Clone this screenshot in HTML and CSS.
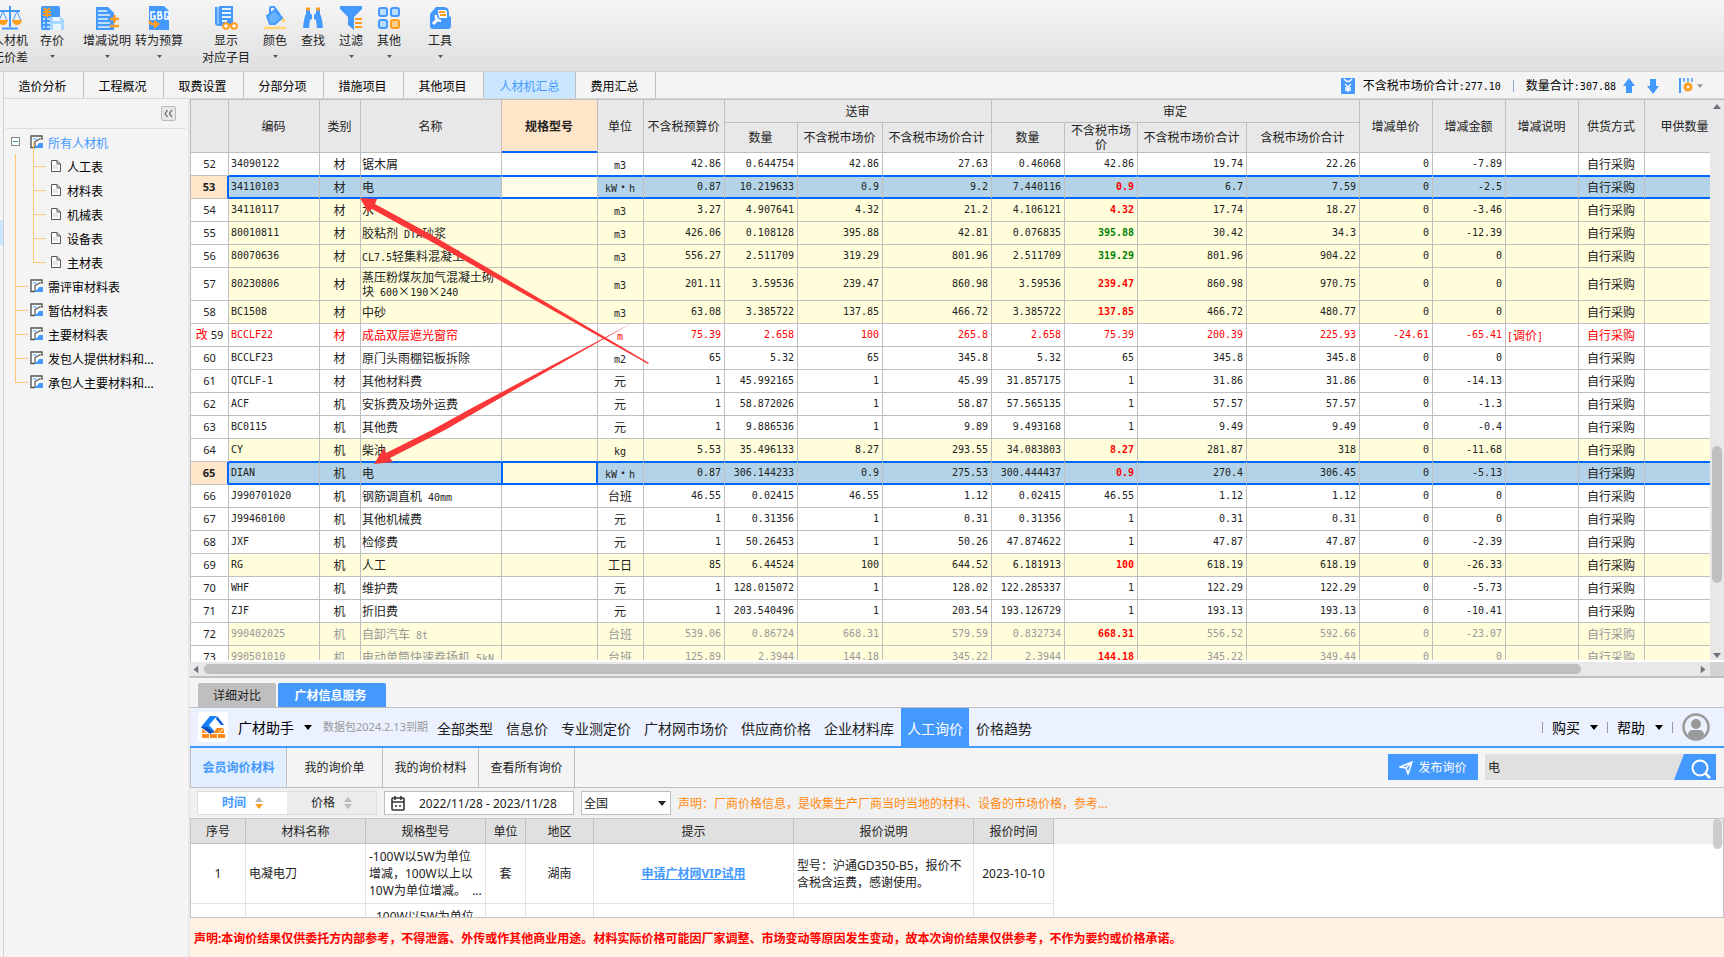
FILE: index.html
```html
<!DOCTYPE html>
<html lang="zh-CN">
<head>
<meta charset="utf-8">
<title>人材机汇总</title>
<link rel="stylesheet" href="styles.css">
</head>
<body>
<svg class="defs" aria-hidden="true">
  <symbol id="sheet" viewBox="0 0 14 14"><path d="M12 4V1H1V12.500H5" fill="#fff" stroke="#555" stroke-width="1.400"/><path d="M3 3h4v2H3z" fill="#a8d0ff"/><path d="M5 12.500V6.500L7.500 5.500 9.500 4H13" fill="none" stroke="#555" stroke-width="1.200"/><path d="M5 13V11h2l2-3h4v5z" fill="#4499ff"/></symbol>
  <symbol id="page" viewBox="0 0 10 12"><path d="M.5.5H6L9.500 4V11.500H.5z" fill="#fff" stroke="#555"/><path d="M6 .5V4H9.500" fill="none" stroke="#555"/><path d="M2 6h5M2 8h5" stroke="#ccc"/></symbol>
  <symbol id="caret" viewBox="0 0 8 5"><path d="M0 0H8L4 5z" fill="currentColor"/></symbol>
</svg>

<header class="toolbar">
  <button class="tool cut"><svg viewBox="0 0 24 24"><path d="M12 0v21M2 5h20M4 22.500h16" stroke="#4499ff" stroke-width="2" fill="none"/><path d="M5 5L1 15h8zM19 5l-4 10h8z" fill="none" stroke="#4499ff"/><path d="M0 14h10q-1 5-5 5t-5-5zM14 14h10q-1 5-5 5t-5-5z" fill="#ff9d1e"/></svg><span>人材机</span><span>无价差</span></button>
  <button class="tool"><svg viewBox="0 0 24 24"><rect x="1" y="0" width="19" height="24" rx="2" fill="#4499ff"/><path d="M3 13h2M3 17h2M3 21h2M7 13h3M7 17h3M7 21h3" stroke="#b9dcff" stroke-width="2"/><path d="M4 2l3 3 3-3M7 5v6M3 6h8M3 9h8" stroke="#ff9d1e" stroke-width="2" fill="none"/><path d="M10 11h11l3 3v10H10z" fill="#a9d6ff"/><path d="M13 11h7v4h-7zM13 18h8v6h-8z" fill="#e8f5ff"/></svg><span>存价</span><svg class="dd"><use href="#caret"/></svg></button>
  <button class="tool wide first"><svg viewBox="0 0 24 24"><path d="M1 1h12l6 6v17H1z" fill="#4499ff"/><path d="M3 5h9M3 9h12M3 13h10M3 17h12M3 21h12" stroke="#e4f2ff" stroke-width="1.500"/><path d="M15 13h9M19.500 9v8M15 20h9" stroke="#ff9d1e" stroke-width="2.500"/></svg><span>增减说明</span><svg class="dd"><use href="#caret"/></svg></button>
  <button class="tool wide"><svg viewBox="0 0 24 24"><path d="M2 0h15l5 5v19H2z" fill="#4499ff"/><path d="M8 6H4v7h4v-3H6M11 6v7h2q2 0 2-2t-3-1.500q3-.5 2-3.500zM18 6h4v6l-1 1h-3zM20 10l3 4" fill="none" stroke="#fff" stroke-width="1.500"/><path d="M1 15q1 5 6 4v4l6-5-6-4v3q-3 0-3-2z" fill="#ff9d1e"/></svg><span>转为预算</span><svg class="dd"><use href="#caret"/></svg></button>
  <button class="tool wide split"><svg viewBox="0 0 24 24"><path d="M1 1h4v17q0 2 4 2H5q-4 0-4-3z" fill="#4499ff"/><path d="M5 0h14v20H5z" fill="#4499ff"/><path d="M8 3h9M8 7h9M8 11h9M8 15h5" stroke="#e4f2ff" stroke-width="2"/><path d="M4 1v17" stroke="#cfe6ff"/><circle cx="12" cy="20" r="2.800" fill="#fff" stroke="#ff9d1e" stroke-width="2"/><circle cx="20" cy="20" r="2.800" fill="#fff" stroke="#ff9d1e" stroke-width="2"/><path d="M14 19h4" stroke="#ff9d1e" stroke-width="2"/></svg><span>显示</span><span>对应子目</span></button>
  <button class="tool colour"><svg viewBox="0 0 24 24"><path d="M4 10L12 4l7 8-7 6H7z" fill="#68b2ff" stroke="#4499ff" stroke-width="2"/><path d="M7 7V3q0-3 4-2l6 8" fill="none" stroke="#4499ff" stroke-width="2"/><path d="M20.500 12q4 4 0 4t0-4z" fill="#ffd15c"/><path d="M1 22h22" stroke="#ffd678" stroke-width="2.500"/></svg><span>颜色</span><svg class="dd"><use href="#caret"/></svg></button>
  <button class="tool"><svg viewBox="0 0 24 24"><path d="M5 2h4v5l2 2v4l-2 1-1 8H2Q3 11 5 8zM19 2h-4v5l-2 2v4l2 1 1 8h6Q21 11 19 8z" fill="#4499ff"/><path d="M5 3h4M15 3h4" stroke="#ff9d1e" stroke-width="3"/></svg><span>查找</span></button>
  <button class="tool"><svg viewBox="0 0 24 24"><path d="M1 0h22v3l-8 8v13l-6-5v-8L1 3z" fill="#4499ff"/><path d="M16 13h7M16 17h7M16 21h7" stroke="#ff9d1e" stroke-width="2"/></svg><span>过滤</span><svg class="dd"><use href="#caret"/></svg></button>
  <button class="tool"><svg viewBox="0 0 24 24"><g fill="#b9dcff" stroke="#4499ff" stroke-width="2"><rect x="2" y="2" width="8" height="8" rx="2"/><rect x="14" y="2" width="8" height="8" rx="2"/><rect x="2" y="14" width="8" height="8" rx="2"/></g><rect x="14" y="14" width="8" height="8" rx="2" fill="#ffd08a" stroke="#ff9d1e" stroke-width="2"/></svg><span>其他</span><svg class="dd"><use href="#caret"/></svg></button>
  <button class="tool last"><svg viewBox="0 0 24 24"><path d="M8 1h8q5 0 5 6v3l2 1v9q0 3-3 3H5q-3 0-3-3V8z" fill="#4499ff"/><path d="M10 4h7q2 0 2 3v5h-8z" fill="#fff"/><path d="M11 6h6M12 9h6" stroke="#ff9d1e" stroke-width="2"/><path d="M5 18l5-5" stroke="#fff" stroke-width="3"/><path d="M8 9q-1 5 5 6" fill="none" stroke="#fff" stroke-width="2.500"/></svg><span>工具</span><svg class="dd"><use href="#caret"/></svg></button>
</header>

<div class="app">
  <div class="edge"><i></i></div>
  <div class="main">
    <nav class="tabs">
      <button>造价分析</button><button>工程概况</button><button>取费设置</button><button>分部分项</button><button>措施项目</button><button>其他项目</button><button class="on">人材机汇总</button><button>费用汇总</button>
      <div class="totals">
        <svg width="14" height="16" viewBox="0 0 14 16"><rect width="14" height="16" rx="1" fill="#4499ff"/><path d="M3 1q4 5 8 0M4 6l3 3 3-3M7 9v5M4 10h6M4 12h6" fill="none" stroke="#fff" stroke-width="1.300"/></svg>
        <span>不含税市场价合计<span class="m">:277.10</span></span><b></b><span>数量合计<span class="m">:307.88</span></span>
        <svg class="up" width="12" height="16" viewBox="0 0 12 16"><path d="M6 0l6 8H9v7H3V8H0z" fill="#4499ff"/></svg>
        <svg class="down" width="12" height="16" viewBox="0 0 12 16"><path d="M6 16l6-8H9V1H3v7H0z" fill="#4499ff"/></svg>
        <svg width="14" height="15" viewBox="0 0 14 15"><path d="M1 0v15" stroke="#4499ff" stroke-width="2"/><path d="M5 0v4M9 0v4M13 0v4" stroke="#4499ff" stroke-width="1.500"/><circle cx="9" cy="9" r="3" fill="none" stroke="#ff9d1e" stroke-width="3"/></svg>
        <svg class="tiny" width="6" height="4"><use href="#caret"/></svg>
      </div>
    </nav>

    <div class="work">
      <aside class="side">
        <div class="sidehead"><button aria-label="收起"><svg width="10" height="8" viewBox="0 0 10 8"><path d="M4 0L1 4l3 4M9 0L6 4l3 4" fill="none" stroke="#555" stroke-width="1.200"/></svg></button></div>
        <ul class="tree">
          <li class="root"><i class="box"></i><svg class="sh"><use href="#sheet"/></svg><a href="#all">所有人材机</a>
            <ul>
              <li><svg><use href="#page"/></svg><a href="#a">人工表</a></li>
              <li><svg><use href="#page"/></svg><a href="#b">材料表</a></li>
              <li><svg><use href="#page"/></svg><a href="#c">机械表</a></li>
              <li><svg><use href="#page"/></svg><a href="#d">设备表</a></li>
              <li><svg><use href="#page"/></svg><a href="#e">主材表</a></li>
            </ul>
          </li>
          <li><svg class="sh"><use href="#sheet"/></svg><a href="#f">需评审材料表</a></li>
          <li><svg class="sh"><use href="#sheet"/></svg><a href="#g">暂估材料表</a></li>
          <li><svg class="sh"><use href="#sheet"/></svg><a href="#h">主要材料表</a></li>
          <li><svg class="sh"><use href="#sheet"/></svg><a href="#i">发包人提供材料和...</a></li>
          <li><svg class="sh"><use href="#sheet"/></svg><a href="#j">承包人主要材料和...</a></li>
        </ul>
      </aside>

      <section class="content">
        <div class="gridwrap">
          <div class="gridclip">
          <table class="grid">
            <colgroup><col class="w38"><col class="w91"><col class="w41"><col class="w141"><col class="w96"><col class="w46"><col class="w81"><col class="w73"><col class="w85"><col class="w109"><col class="w73"><col class="w73"><col class="w109"><col class="w113"><col class="w73"><col class="w73"><col class="w73"><col class="w66"><col class="w81"></colgroup>
            <thead>
              <tr><th rowspan="2"></th><th rowspan="2">编码</th><th rowspan="2">类别</th><th rowspan="2">名称</th><th rowspan="2" class="cur">规格型号</th><th rowspan="2">单位</th><th rowspan="2">不含税预算价</th><th colspan="3">送审</th><th colspan="4">审定</th><th rowspan="2">增减单价</th><th rowspan="2">增减金额</th><th rowspan="2">增减说明</th><th rowspan="2">供货方式</th><th rowspan="2">甲供数量</th></tr>
              <tr class="sub"><th>数量</th><th>不含税市场价</th><th>不含税市场价合计</th><th>数量</th><th class="wrap">不含税市场价</th><th>不含税市场价合计</th><th>含税市场价合计</th></tr>
            </thead>
            <tbody>
              <tr><th>52<td>34090122<td>材<td>锯木屑<td><td><span class="m">m3</span><td>42.86<td>0.644754<td>42.86<td>27.63<td>0.46068<td>42.86<td>19.74<td>22.26<td>0<td>-7.89<td><td>自行采购<td></tr>
              <tr class="s"><th>53<td>34110103<td>材<td>电<td><td><span class="m">kW</span>·<span class="m">h</span><td>0.87<td>10.219633<td>0.9<td>9.2<td>7.440116<td class="hi">0.9<td>6.7<td>7.59<td>0<td>-2.5<td><td>自行采购<td></tr>
              <tr class="y"><th>54<td>34110117<td>材<td>水<td><td><span class="m">m3</span><td>3.27<td>4.907641<td>4.32<td>21.2<td>4.106121<td class="hi">4.32<td>17.74<td>18.27<td>0<td>-3.46<td><td>自行采购<td></tr>
              <tr class="y"><th>55<td>80010811<td>材<td>胶粘剂<span class="m"> DTA</span>砂浆<td><td><span class="m">m3</span><td>426.06<td>0.108128<td>395.88<td>42.81<td>0.076835<td class="lo">395.88<td>30.42<td>34.3<td>0<td>-12.39<td><td>自行采购<td></tr>
              <tr class="y"><th>56<td>80070636<td>材<td><span class="m">CL7.5</span>轻集料混凝土<td><td><span class="m">m3</span><td>556.27<td>2.511709<td>319.29<td>801.96<td>2.511709<td class="lo">319.29<td>801.96<td>904.22<td>0<td>0<td><td>自行采购<td></tr>
              <tr class="y tall"><th>57<td>80230806<td>材<td>蒸压粉煤灰加气混凝土砌块<span class="m"> 600</span>×<span class="m">190</span>×<span class="m">240</span><td><td><span class="m">m3</span><td>201.11<td>3.59536<td>239.47<td>860.98<td>3.59536<td class="hi">239.47<td>860.98<td>970.75<td>0<td>0<td><td>自行采购<td></tr>
              <tr class="y"><th>58<td>BC1508<td>材<td>中砂<td><td><span class="m">m3</span><td>63.08<td>3.385722<td>137.85<td>466.72<td>3.385722<td class="hi">137.85<td>466.72<td>480.77<td>0<td>0<td><td>自行采购<td></tr>
              <tr class="r"><th class="mod"><span>改</span> 59<td>BCCLF22<td>材<td>成品双层遮光窗帘<td><td><span class="m">m</span><td>75.39<td>2.658<td>100<td>265.8<td>2.658<td>75.39<td>200.39<td>225.93<td>-24.61<td>-65.41<td><span class="m">[</span>调价<span class="m">]</span><td>自行采购<td></tr>
              <tr><th>60<td>BCCLF23<td>材<td>原门头雨棚铝板拆除<td><td><span class="m">m2</span><td>65<td>5.32<td>65<td>345.8<td>5.32<td>65<td>345.8<td>345.8<td>0<td>0<td><td>自行采购<td></tr>
              <tr><th>61<td>QTCLF-1<td>材<td>其他材料费<td><td>元<td>1<td>45.992165<td>1<td>45.99<td>31.857175<td>1<td>31.86<td>31.86<td>0<td>-14.13<td><td>自行采购<td></tr>
              <tr><th>62<td>ACF<td>机<td>安拆费及场外运费<td><td>元<td>1<td>58.872026<td>1<td>58.87<td>57.565135<td>1<td>57.57<td>57.57<td>0<td>-1.3<td><td>自行采购<td></tr>
              <tr><th>63<td>BC0115<td>机<td>其他费<td><td>元<td>1<td>9.886536<td>1<td>9.89<td>9.493168<td>1<td>9.49<td>9.49<td>0<td>-0.4<td><td>自行采购<td></tr>
              <tr class="y"><th>64<td>CY<td>机<td>柴油<td><td><span class="m">kg</span><td>5.53<td>35.496133<td>8.27<td>293.55<td>34.083803<td class="hi">8.27<td>281.87<td>318<td>0<td>-11.68<td><td>自行采购<td></tr>
              <tr class="s edit"><th>65<td>DIAN<td>机<td>电<td><td><span class="m">kW</span>·<span class="m">h</span><td>0.87<td>306.144233<td>0.9<td>275.53<td>300.444437<td class="hi">0.9<td>270.4<td>306.45<td>0<td>-5.13<td><td>自行采购<td></tr>
              <tr><th>66<td>J990701020<td>机<td>钢筋调直机<span class="m"> 40mm</span><td><td>台班<td>46.55<td>0.02415<td>46.55<td>1.12<td>0.02415<td>46.55<td>1.12<td>1.12<td>0<td>0<td><td>自行采购<td></tr>
              <tr><th>67<td>J99460100<td>机<td>其他机械费<td><td>元<td>1<td>0.31356<td>1<td>0.31<td>0.31356<td>1<td>0.31<td>0.31<td>0<td>0<td><td>自行采购<td></tr>
              <tr><th>68<td>JXF<td>机<td>检修费<td><td>元<td>1<td>50.26453<td>1<td>50.26<td>47.874622<td>1<td>47.87<td>47.87<td>0<td>-2.39<td><td>自行采购<td></tr>
              <tr class="y"><th>69<td>RG<td>机<td>人工<td><td>工日<td>85<td>6.44524<td>100<td>644.52<td>6.181913<td class="hi">100<td>618.19<td>618.19<td>0<td>-26.33<td><td>自行采购<td></tr>
              <tr><th>70<td>WHF<td>机<td>维护费<td><td>元<td>1<td>128.015072<td>1<td>128.02<td>122.285337<td>1<td>122.29<td>122.29<td>0<td>-5.73<td><td>自行采购<td></tr>
              <tr><th>71<td>ZJF<td>机<td>折旧费<td><td>元<td>1<td>203.540496<td>1<td>203.54<td>193.126729<td>1<td>193.13<td>193.13<td>0<td>-10.41<td><td>自行采购<td></tr>
              <tr class="y g"><th>72<td>990402025<td>机<td>自卸汽车<span class="m"> 8t</span><td><td>台班<td>539.06<td>0.86724<td>668.31<td>579.59<td>0.832734<td class="hi">668.31<td>556.52<td>592.66<td>0<td>-23.07<td><td>自行采购<td></tr>
              <tr class="y g"><th>73<td>990501010<td>机<td>电动单筒快速卷扬机<span class="m"> 5kN</span><td><td>台班<td>125.89<td>2.3944<td>144.18<td>345.22<td>2.3944<td class="hi">144.18<td>345.22<td>349.44<td>0<td>0<td><td>自行采购<td></tr>
            </tbody>
          </table>
          </div>
          <div class="vbar"><svg class="aup" width="8" height="5"><use href="#caret"/></svg><i></i><svg width="8" height="5"><use href="#caret"/></svg></div>
          <svg class="marks" width="300" height="300" viewBox="355 190 300 300" aria-hidden="true"><path d="M360 198L377 199 375 204 430 234 649 363 648 364 430 241 372 209 368 212zM374 464L384 448 386 453 432 430 470 409 632 323 502 397 445 430 390 458 393 462z" fill="#fb3737"/></svg>
        </div>
        <div class="hbar"><svg class="al" width="8" height="5"><use href="#caret"/></svg><div class="track"><i></i></div><svg class="ar" width="8" height="5"><use href="#caret"/></svg><b></b></div>

        <div class="ptabs"><button>详细对比</button><button class="on">广材信息服务</button></div>

        <div class="pnav">
          <svg class="logo" viewBox="0 0 30 30"><rect width="30" height="30" rx="4" fill="#fff"/><path d="M3 15L12 4h7l-8 9 7 8h-6z" fill="#1583f7"/><path d="M19 4l7 9h-3l-5-6z" fill="#0b5de0"/><path d="M3 15h6l6 5-3 2z" fill="#0f4fb5"/><path d="M4 17l5 4h-5zM19 16h7l-6 5h-5zM4 22h7v4H4zM12 22h7v4h-7zM20 22h7v4h-7zM26 17v4h-5z" fill="#ff8a1c"/></svg>
          <button class="brand">广材助手 <svg width="8" height="5"><use href="#caret"/></svg></button>
          <small>数据包2024.2.13到期</small>
          <nav><a href="#1">全部类型</a><a href="#2">信息价</a><a href="#3">专业测定价</a><a href="#4">广材网市场价</a><a href="#5">供应商价格</a><a href="#6">企业材料库</a><a href="#7" class="on">人工询价</a><a href="#8">价格趋势</a></nav>
          <div class="acct"><button>购买 <svg width="8" height="5"><use href="#caret"/></svg></button><button>帮助 <svg width="8" height="5"><use href="#caret"/></svg></button><b></b><svg class="ava" viewBox="0 0 28 28"><circle cx="14" cy="14" r="12.500" fill="none" stroke="#999" stroke-width="2.500"/><circle cx="14" cy="11" r="5" fill="#999"/><path d="M6 22q0-5 5-5h6q5 0 5 5l-3 3H9z" fill="#999"/></svg></div>
        </div>

        <div class="sub2">
          <button class="on">会员询价材料</button><button>我的询价单</button><button>我的询价材料</button><button>查看所有询价</button>
          <button class="pub"><svg width="14" height="14" viewBox="0 0 14 14"><path d="M1 6L13 1 9 13 7 7zM7 7l6-6" fill="none" stroke="#fff" stroke-width="1.500"/></svg>发布询价</button>
          <form class="search"><input type="text" value="电" aria-label="搜索"><button type="button" aria-label="搜索"><svg width="20" height="20" viewBox="0 0 20 20"><circle cx="9" cy="9" r="7.500" fill="none" stroke="#fff" stroke-width="2"/><path d="M14 14l5 5" stroke="#fff" stroke-width="2.500"/></svg></button></form>
        </div>

        <div class="filter">
          <div class="sorts"><button class="on">时间<svg width="8" height="12" viewBox="0 0 8 12"><path d="M0 5h8L4 0z" fill="#bbb"/><path d="M0 7h8l-4 5z" fill="#ff9d1e"/></svg></button><button>价格<svg width="8" height="12" viewBox="0 0 8 12"><path d="M0 5h8L4 0zM0 7h8l-4 5z" fill="#bbb"/></svg></button></div>
          <label class="date"><svg width="14" height="15" viewBox="0 0 14 15"><rect x="1" y="2" width="12" height="12" rx="1" fill="none" stroke="#333" stroke-width="1.600"/><path d="M1 6h12M4 0v4M10 0v4M4 10h2M8 10h2" stroke="#333" stroke-width="1.600"/></svg><input type="text" value="2022/11/28 - 2023/11/28" aria-label="日期"></label>
          <label class="region"><select aria-label="地区"><option>全国</option></select><svg width="8" height="5"><use href="#caret"/></svg></label>
          <p>声明：厂商价格信息，是收集生产厂商当时当地的材料、设备的市场价格，参考...</p>
        </div>

        <div class="quotes">
          <table>
            <colgroup><col class="w55"><col class="w120"><col class="w120"><col class="w40"><col class="w68"><col class="w200"><col class="w180"><col class="w80"></colgroup>
            <thead><tr><th>序号</th><th>材料名称</th><th>规格型号</th><th>单位</th><th>地区</th><th>提示</th><th>报价说明</th><th>报价时间</th></tr></thead>
            <tbody>
              <tr><td>1</td><td class="l">电凝电刀</td><td class="l">-100W以5W为单位<br>增减，100W以上以<br>10W为单位增减。&nbsp; ...</td><td>套</td><td>湖南</td><td><a href="#vip">申请广材网VIP试用</a></td><td class="l">型号：沪通GD350-B5，报价不含税含运费，感谢使用。</td><td>2023-10-10</td></tr>
              <tr class="next"><td></td><td></td><td class="l">&nbsp;-100W以5W为单位</td><td></td><td></td><td></td><td></td><td></td></tr>
            </tbody>
          </table>
          <i class="thumb"></i>
        </div>
        <footer>声明:本询价结果仅供委托方内部参考，不得泄露、外传或作其他商业用途。材料实际价格可能因厂家调整、市场变动等原因发生变动，故本次询价结果仅供参考，不作为要约或价格承诺。</footer>
      </section>
    </div>
  </div>
</div>
</body>
</html>
```
FILE: styles.css
```css
* { box-sizing: border-box; }
body { margin: 0; height: 100vh; display: flex; flex-direction: column; overflow: hidden; background: #f4f4f4; color: #222; font: 12px/16px "Noto Sans", "Noto Sans CJK SC", sans-serif; }
button, input, select { font: inherit; color: inherit; margin: 0; padding: 0; border: 0; background: none; border-radius: 0; }
a { color: inherit; text-decoration: none; }
svg { display: block; flex: none; }
.defs { position: absolute; width: 0; height: 0; }
.m { font: 10px/12px "DejaVu Sans Mono", monospace; white-space: pre; }

/* toolbar */
.toolbar { height: 72px; flex: none; display: flex; align-items: flex-start; padding-top: 6px; background: linear-gradient(#f5f5f5, #dfdfdf); border-bottom: 1px solid #cfcfcf; }
.tool { width: 38px; display: flex; flex-direction: column; align-items: center; white-space: nowrap; }
.tool > svg { width: 24px; height: 24px; margin-bottom: 2px; }
.tool > span { height: 17px; line-height: 17px; }
.tool > .dd { width: 5px; height: 3px; margin-top: 6px; color: #555; }
.cut { margin-left: -9px; margin-right: 4px; }
.wide { width: 52px; }
.first { margin-left: 10px; }
.split { margin-left: 15px; }
.colour { margin-left: 4px; }
.last { margin-left: 13px; }

.app { flex: 1; min-height: 0; display: flex; }
.edge { width: 4px; flex: none; border-right: 1px solid #d0d0d0; padding-top: 148px; }
.edge i { display: block; height: 25px; background: #cbe6ff; }
.main { flex: 1; min-width: 0; display: flex; flex-direction: column; }
.tabs { height: 27px; flex: none; display: flex; border-bottom: 1px solid #d8d8d8; color: #000; }
.tabs button { width: 80px; border-right: 1px solid #bfbfbf; padding: 3px 2px 0 0; }
.tabs .on { width: 92px; background: #cbe6ff; color: #4499ff; padding-right: 0; }
.totals { margin-left: auto; display: flex; align-items: center; padding-right: 21px; gap: 8px; padding-top: 1px; }
.totals b { width: 1px; height: 12px; margin: 0 4px; background: #8aa9d0; }
.totals .up { margin-left: -1px; }
.totals .down { margin: 0 12px 0 4px; }
.totals .tiny { color: #999; margin-left: -4px; }

.work { flex: 1; min-height: 0; display: flex; }
.side { width: 186px; flex: none; border-right: 2px solid #e8e8e8; padding: 0 2px; }
.sidehead { height: 30px; padding: 7px 10px 0 0; display: flex; justify-content: flex-end; border-bottom: 1px solid #dedede; }
.sidehead button { width: 15px; height: 15px; border: 1px solid #bbb; border-radius: 2px; background: #e8e8e8; padding: 3px 2px; }
.sidehead svg { width: 9px; height: 7px; }
.tree, .tree ul { list-style: none; margin: 0; padding: 0; }
.tree { padding: 3px 0 0 24px; color: #000; }
.tree li { position: relative; min-height: 24px; display: flex; flex-wrap: wrap; align-items: center; line-height: 24px; column-gap: 4px; }
.tree .sh { width: 14px; height: 14px; margin-bottom: 4px; }
.tree ul { width: 100%; padding-left: 21px; }
.tree ul svg { width: 10px; height: 12px; margin-bottom: 4px; }
.tree ul li { column-gap: 6px; }
.root > a { color: #4499ff; }
.box { position: absolute; left: -19px; top: 5px; width: 9px; height: 9px; border: 1px solid #888; background: linear-gradient(#39a, #39a) center / 5px 1px no-repeat #fff; }
.tree li:not(.root)::before { content: ""; position: absolute; left: -15px; top: -14px; width: 12px; height: 24px; border: solid #ffc673; border-width: 0 0 1px 1px; }
.tree ul li::before { left: -18px !important; }
.root::after { content: ""; position: absolute; left: -15px; top: 22px; bottom: 0; border-left: 1px solid #ffc673; }

/* price grid */
.content { flex: 1; min-width: 0; display: flex; flex-direction: column; }
.gridwrap { flex: 1; min-height: 0; display: flex; position: relative; background: #fff; border-left: 1px solid #bfbfbf; border-top: 1px solid #bfbfbf; padding-bottom: 2px; }
.gridclip { flex: 1; min-width: 0; overflow: hidden; }
table { table-layout: fixed; border-collapse: separate; border-spacing: 0; }
.grid { width: 1535px; font: 12px/14px "Noto Sans CJK SC", sans-serif; }
.grid th, .grid td { border: solid #bfbfbf; border-width: 0 1px 1px 0; padding: 0 2px; white-space: nowrap; overflow: hidden; font-weight: 400; }
.grid thead th { background: #e8e8e8; height: 23px; padding: 0 1px 0 0; }
.grid thead .sub th { height: 30px; line-height: 14px; padding-bottom: 1px; }
.grid thead .sub .wrap { white-space: normal; padding: 0 3px 1px; }
.grid thead .cur { background: #ffe6c8; font-weight: 700; box-shadow: inset 0 -1px #06f; border-bottom-color: #06f; }
.grid tbody tr { height: 23px; }
.grid tbody .tall { height: 33px; }
.grid tbody th { font: 11px/14px "Noto Sans", "Noto Sans CJK SC", sans-serif; background: #fff; }
.grid .mod { padding: 0; }
.mod span { color: #f00; font-size: 12px; }
.grid td { text-align: right; font: 10px/14px "DejaVu Sans Mono", "Noto Sans CJK SC", monospace; padding-right: 3px; }
.grid td:nth-child(2) { text-align: left; }
.grid td:nth-child(3), .grid td:nth-child(6), .grid td:nth-child(18) { text-align: center; font: 12px/14px "Noto Sans CJK SC", sans-serif; padding-right: 3px; }
.grid td:nth-child(4), .grid td:nth-child(17) { text-align: left; font: 12px/14px "Noto Sans CJK SC", sans-serif; padding-left: 1px; }
.grid .tall td:nth-child(4) { white-space: normal; }
.y td { background: #fffdda; }
.r td { color: #f00; }
.g td { color: #999; }
.grid .hi { color: #f00; font-weight: 700; }
.grid .lo { color: #008000; font-weight: 700; }
.s td { background: #b3d4e8; box-shadow: inset 0 1px #06f, inset 0 -1px #06f; border-bottom-color: #06f; }
.grid tbody .s th { background: #ffe6c8; font-weight: 700; border-right: 2px solid #06f; }
tr:has(+ .s) td { border-bottom-color: #06f; }
.s td:nth-child(5) { background: #fffdea; }
.edit td:nth-child(5) { background: #fffdda; box-shadow: inset 0 0 0 1px #06f; border-right-color: #06f; }
.edit td:nth-child(4) { border-right-color: #06f; }
.w38 { width: 38px; } .w40 { width: 40px; } .w41 { width: 41px; } .w46 { width: 46px; } .w55 { width: 55px; } .w66 { width: 66px; } .w68 { width: 68px; } .w73 { width: 73px; } .w80 { width: 80px; } .w81 { width: 81px; } .w85 { width: 85px; } .w91 { width: 91px; } .w96 { width: 96px; } .w109 { width: 109px; } .w113 { width: 113px; } .w120 { width: 120px; } .w141 { width: 141px; } .w180 { width: 180px; } .w200 { width: 200px; }
.vbar { width: 14px; flex: none; background: #e8e8e8; display: flex; flex-direction: column; align-items: center; padding: 4px 0 2px; color: #70707a; }
.vbar i { width: 10px; height: 137px; border-radius: 5px; background: #bfbfbf; margin: 337px 0 auto; }
.aup { transform: rotate(180deg); }
.marks { position: absolute; left: 164px; top: 90px; pointer-events: none; }
.hbar { height: 16px; flex: none; display: flex; align-items: center; background: #e8e8e8; border-bottom: 2px solid #bfbfbf; color: #70707a; }
.hbar b { width: 14px; align-self: stretch; background: #d3d3d3; }
.al { transform: rotate(90deg); margin: 0 4px 0 2px; }
.ar { transform: rotate(-90deg); margin: 0 3px; }
.track { flex: 1; }
.track i { display: block; width: 92.3%; height: 10px; border-radius: 5px; background: #bfbfbf; }

/* information service panel */
.ptabs { height: 30px; flex: none; display: flex; gap: 2px; padding: 5px 8px 0; border-bottom: 1px solid #bfbfbf; }
.ptabs button { width: 78px; background: #bfbfbf; border-radius: 2px 2px 0 0; padding-top: 1px; }
.ptabs .on { width: 108px; background: #4499ff; color: #fff; font-weight: 700; padding-right: 3px; }
.pnav { height: 40px; flex: none; display: flex; align-items: center; background: #ebf1ff; border-bottom: 2px solid #4499ff; font-size: 14px; line-height: 20px; padding-left: 8px; white-space: nowrap; }
.logo { width: 30px; height: 30px; margin-right: 10px; }
.pnav button { display: flex; align-items: center; gap: 10px; padding-top: 1px; color: #000; }
.pnav small { font-size: 11px; color: #999; width: 102px; margin: 0 6px 0 11px; }
.pnav nav { display: flex; gap: 1px; align-self: stretch; }
.pnav nav a { padding: 4px 6px 0; display: flex; align-items: center; }
.pnav nav .on { background: #4499ff; color: #fff; }
.acct { margin-left: auto; display: flex; align-items: center; padding-right: 14px; }
.acct button { width: 65px; padding-left: 10px; background: linear-gradient(#999, #999) 0 50% / 1px 11px no-repeat; }
.acct b { width: 1px; height: 11px; background: #999; }
.ava { width: 28px; height: 28px; margin-left: 9px; }
.sub2 { height: 40px; flex: none; display: flex; border-left: 1px solid #bfbfbf; border-bottom: 1px solid #bfbfbf; }
.sub2 > button { width: 96px; border-right: 1px solid #bfbfbf; padding-top: 1px; }
.sub2 > .on { background: #e2efff; color: #4499ff; font-weight: 700; }
.sub2 > .pub { width: 90px; height: 26px; margin: 6px 7px 0 auto; border: 0; background: #4499ff; color: #fff; display: flex; align-items: center; justify-content: center; gap: 5px; }
.search { width: 231px; height: 26px; margin: 6px 8px 0 0; display: flex; background: #e0e0e0; }
.search input { flex: 1; min-width: 0; padding: 2px 3px 0; outline: 0; }
.search button { width: 42px; background: #4499ff; clip-path: polygon(10px 0, 100% 0, 100% 100%, 0 100%); padding: 3px 0 0 17px; }
.filter { height: 31px; flex: none; display: flex; align-items: flex-start; gap: 7px; padding: 3px 0 0 7px; background: #f1f1f1; border-bottom: 1px solid #c4c4c4; }
.sorts { display: flex; height: 24px; border: 1px solid #ddd; }
.sorts button { width: 89px; display: flex; align-items: center; justify-content: center; gap: 9px; background: #ececec; }
.sorts .on { background: #fff; color: #4499ff; font-weight: 700; }
.date { width: 190px; height: 24px; display: flex; align-items: center; gap: 14px; background: #fff; border: 1px solid #bfbfbf; padding-left: 6px; }
.date input { flex: 1; min-width: 0; padding-top: 1px; }
.region { width: 90px; height: 24px; display: grid; align-items: center; background: #fff; border: 1px solid #bfbfbf; }
.region > * { grid-area: 1 / 1; }
.region select { appearance: none; height: 22px; padding: 1px 2px 0; }
.region svg { justify-self: end; margin-right: 4px; pointer-events: none; }
.filter p { margin: 5px 0 0; color: #ff8a12; white-space: nowrap; }
.quotes { height: 99px; flex: none; position: relative; overflow: hidden; border: solid #c4c4c4; border-width: 0 1px 1px; background: linear-gradient(#efefef 25px, #fff 25px); }
.quotes table { width: 863px; line-height: 17px; }
.quotes th { background: #e0e0e0; font-weight: 400; height: 25px; padding: 0; border: solid #bfbfbf; border-width: 0 1px 1px 0; }
.quotes td { background: #fff; height: 60px; padding: 0 3px; text-align: center; border: solid #e2e2e2; border-width: 0 1px 1px 0; }
.quotes .l { text-align: left; white-space: nowrap; }
.quotes .l:nth-child(7) { white-space: normal; }
.quotes .next td { vertical-align: top; padding-top: 4px; }
.quotes a { color: #4499ff; font-weight: 700; text-decoration: underline; }
.thumb { position: absolute; right: 1px; top: 0; width: 9px; height: 30px; border-radius: 5px; background: #cbcbcb; }
footer { height: 39px; flex: none; background: #fff1e3; color: #f00; font-weight: 700; line-height: 41px; padding-left: 4px; white-space: nowrap; overflow: hidden; }
```
